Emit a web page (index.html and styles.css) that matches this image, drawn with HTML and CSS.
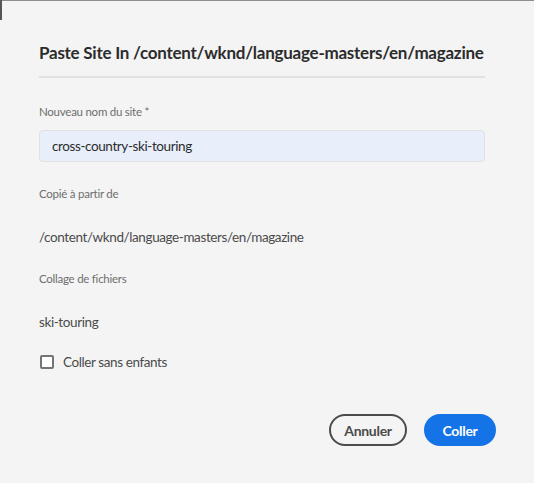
FILE: index.html
```html
<!DOCTYPE html>
<html lang="fr">
<head>
<meta charset="utf-8">
<link rel="stylesheet" href="styles.css">
</head>
<body>
<div class="topbar"></div>
<div class="edge"></div>
<div class="dialog">
  <h1 class="title">Paste Site In /content/wknd/language-masters/en/magazine</h1>
  <div class="divider"></div>
  <div class="field field-name">
    <label class="label label-input">Nouveau nom du site *</label>
    <div class="input">cross-country-ski-touring</div>
  </div>
  <div class="field">
    <div class="label">Copié à partir de</div>
    <div class="value">/content/wknd/language-masters/en/magazine</div>
  </div>
  <div class="field">
    <div class="label">Collage de fichiers</div>
    <div class="value">ski-touring</div>
  </div>
  <label class="check"><span class="box"></span><span>Coller sans enfants</span></label>
  <div class="actions">
    <button class="btn secondary">Annuler</button>
    <button class="btn primary">Coller</button>
  </div>
</div>
</body>
</html>
```
FILE: styles.css
```css
html, body {
  margin: 0;
  padding: 0;
  background: #f4f4f4;
  width: 534px;
  height: 483px;
  overflow: hidden;
  font-family: Lato, "Open Sans", sans-serif;
}
.topbar {
  position: absolute;
  left: 0; top: 0;
  width: 534px;
  height: 1px;
  background: #8e8e8e;
}
.edge {
  position: absolute;
  left: 0; top: 0;
  width: 2px;
  height: 20px;
  background: #555;
}
.dialog {
  padding: 41px 38px 0 39px;
  display: flex;
  flex-direction: column;
}
.title {
  margin: 0;
  width: 446px;
  font-size: 17px;
  letter-spacing: -0.25px;
  font-weight: 700;
  color: #2c2c2c;
  line-height: 24px;
  white-space: nowrap;
}
.divider {
  width: 446px;
  height: 2px;
  background: #e1e1e1;
  margin-top: 11px;
}
.field {
  display: flex;
  flex-direction: column;
  width: 446px;
  margin-top: 24px;
}
.field-name { margin-top: 26px; }
.label {
  font-size: 11.5px;
  letter-spacing: -0.25px;
  color: #6e6e6e;
  line-height: 16px;
  margin-bottom: 25px;
}
.label-input { margin-bottom: 10px; }
.input {
  box-sizing: border-box;
  height: 32px;
  background: #e8effb;
  border: 1px solid #e1e1e1;
  border-radius: 4px;
  padding: 0 12px;
  font-size: 13.5px;
  letter-spacing: -0.4px;
  line-height: 30px;
  color: #2c2c2c;
}
.value {
  font-size: 13.5px;
  letter-spacing: -0.4px;
  line-height: 20px;
  color: #4b4b4b;
}
.check {
  display: flex;
  align-items: center;
  gap: 9px;
  margin-top: 20px;
  font-size: 13.5px;
  letter-spacing: -0.4px;
  color: #4b4b4b;
  line-height: 20px;
}
.box {
  box-sizing: border-box;
  width: 14px;
  height: 14px;
  border: 2px solid #747474;
  border-radius: 2px;
  background: #fff;
  margin-left: 1px;
}
.actions {
  display: flex;
  justify-content: flex-end;
  gap: 17px;
  width: 457px;
  margin-top: 42px;
}
.btn {
  box-sizing: border-box;
  height: 32px;
  border-radius: 16px;
  font-family: inherit;
  font-size: 14px;
  letter-spacing: -0.3px;
  font-weight: 700;
  padding: 0;
  cursor: pointer;
}
.secondary {
  width: 78px;
  background: transparent;
  border: 2px solid #4b4b4b;
  color: #4b4b4b;
}
.primary {
  width: 72px;
  background: #1473e6;
  border: 2px solid #1473e6;
  color: #fff;
}
```
